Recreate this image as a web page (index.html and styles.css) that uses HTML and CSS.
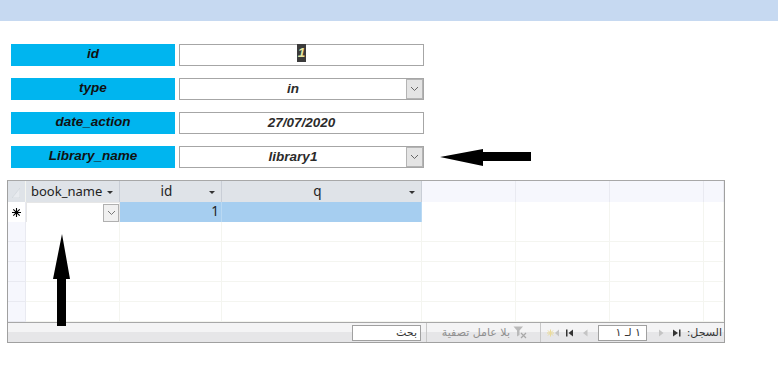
FILE: index.html
```html
<!DOCTYPE html>
<html lang="ar">
<head>
  <meta charset="UTF-8">
  <title>book_move</title>
  <link rel="stylesheet" href="styles.css">
</head>
<body dir="ltr">
  <div class="topbar"></div>

  <!-- Main form -->
  <div class="form">
    <div class="form-row">
      <div class="form-label">id</div>
      <div class="form-field"><span class="field-text"><span class="caret-sel">1</span></span></div>
    </div>
    <div class="form-row">
      <div class="form-label">type</div>
      <div class="form-field">
        <span class="field-text">in</span>
        <span class="drop-btn"><svg width="9" height="6" viewBox="0 0 9 6"><path d="M1 1 L4.5 4.5 L8 1" fill="none" stroke="#666" stroke-width="1"/></svg></span>
      </div>
    </div>
    <div class="form-row">
      <div class="form-label">date_action</div>
      <div class="form-field"><span class="field-text">27/07/2020</span></div>
    </div>
    <div class="form-row">
      <div class="form-label">Library_name</div>
      <div class="form-field">
        <span class="field-text">library1</span>
        <span class="drop-btn"><svg width="9" height="6" viewBox="0 0 9 6"><path d="M1 1 L4.5 4.5 L8 1" fill="none" stroke="#666" stroke-width="1"/></svg></span>
      </div>
    </div>
  </div>

  <!-- Subform datasheet -->
  <div class="sheet">
    <div class="sheet-row sheet-head">
      <div class="cell corner"><svg width="8" height="10" viewBox="0 0 8 10"><path d="M8 0 L8 10 L0 10 Z" fill="#e8ebef" stroke="#cfd3d9" stroke-width="0.6"/></svg></div>
      <div class="cell head-cell left"><span class="head-text">book_name</span><span class="head-arrow"></span></div>
      <div class="cell head-cell"><span class="head-text">id</span><span class="head-arrow"></span></div>
      <div class="cell head-cell"><span class="head-text">q</span><span class="head-arrow"></span></div>
      <div class="cell head-empty"></div>
      <div class="cell head-empty"></div>
      <div class="cell head-empty"></div>
      <div class="cell head-empty"></div>
    </div>

    <div class="sheet-row new-row">
      <div class="cell selector">
        <svg width="9" height="9" viewBox="0 0 9 9"><path d="M4.5 0 V9 M0 4.5 H9 M1.3 1.3 L7.7 7.7 M7.7 1.3 L1.3 7.7" stroke="#000" stroke-width="1.1"/></svg>
      </div>
      <div class="cell combo-cell"><span class="combo-btn"><svg width="9" height="6" viewBox="0 0 9 6"><path d="M1 1 L4.5 4.5 L8 1" fill="none" stroke="#777" stroke-width="1"/></svg></span></div>
      <div class="cell sel num">1</div>
      <div class="cell sel"></div>
      <div class="cell"></div>
      <div class="cell"></div>
      <div class="cell"></div>
      <div class="cell"></div>
    </div>

    <div class="sheet-row"><div class="cell selector"></div><div class="cell"></div><div class="cell"></div><div class="cell"></div><div class="cell"></div><div class="cell"></div><div class="cell"></div><div class="cell"></div></div>
    <div class="sheet-row"><div class="cell selector"></div><div class="cell"></div><div class="cell"></div><div class="cell"></div><div class="cell"></div><div class="cell"></div><div class="cell"></div><div class="cell"></div></div>
    <div class="sheet-row"><div class="cell selector"></div><div class="cell"></div><div class="cell"></div><div class="cell"></div><div class="cell"></div><div class="cell"></div><div class="cell"></div><div class="cell"></div></div>
    <div class="sheet-row"><div class="cell selector"></div><div class="cell"></div><div class="cell"></div><div class="cell"></div><div class="cell"></div><div class="cell"></div><div class="cell"></div><div class="cell"></div></div>
    <div class="sheet-row"><div class="cell selector"></div><div class="cell"></div><div class="cell"></div><div class="cell"></div><div class="cell"></div><div class="cell"></div><div class="cell"></div><div class="cell"></div></div>

    <!-- Record navigation -->
    <div class="nav" dir="rtl">
      <span class="nav-label">السجل:</span>
      <span class="nav-ico nav-first"><svg width="8" height="8" viewBox="0 0 8 8"><path d="M0 0.5 L5 4 L0 7.5 Z" fill="#333"/><rect x="6" y="0.5" width="1.5" height="7" fill="#333"/></svg></span>
      <span class="nav-ico nav-prev"><svg width="5" height="8" viewBox="0 0 5 8"><path d="M0 0.5 L4.5 4 L0 7.5 Z" fill="#c4c4c4"/></svg></span>
      <span class="nav-box">١ لـ ١</span>
      <span class="nav-ico nav-next"><svg width="5" height="8" viewBox="0 0 5 8"><path d="M4.5 0.5 L0 4 L4.5 7.5 Z" fill="#c4c4c4"/></svg></span>
      <span class="nav-ico nav-last"><svg width="7" height="8" viewBox="0 0 7 8"><rect x="0" y="0.5" width="1.5" height="7" fill="#333"/><path d="M7 0.5 L2.5 4 L7 7.5 Z" fill="#333"/></svg></span>
      <span class="nav-ico nav-new"><svg width="12" height="8" viewBox="0 0 12 8"><path d="M3.5 0.5 V7.5 M0 4 H7 M1 1.5 L6 6.5 M6 1.5 L1 6.5" stroke="#eadb9a" stroke-width="1"/><path d="M12 0.5 L8 4 L12 7.5 Z" fill="#c4c4c4"/></svg></span>
      <span class="nav-sep"></span>
      <span class="nav-ico nav-filter"><svg width="14" height="13" viewBox="0 0 14 13"><path d="M0.5 0.5 H10 L6.5 4.5 V9 L4 10.5 V4.5 Z" fill="#b9b9b9"/><path d="M8 7 L13 12 M13 7 L8 12" stroke="#a8a8a8" stroke-width="1.2"/></svg></span>
      <span class="nav-filter-text">بلا عامل تصفية</span>
      <span class="nav-sep sep-2"></span>
      <span class="nav-search">بحث</span>
    </div>
  </div>

  <!-- Annotation arrows drawn over the screenshot -->
  <svg class="arrow-left" width="92" height="20" viewBox="0 0 92 20">
    <path d="M0 9 L43 1 L43 4 L91 4 L91 13 L43 13 L43 18 Z" fill="#000"/>
  </svg>
  <svg class="arrow-up" width="18" height="92" viewBox="0 0 18 92">
    <path d="M9 0 L17 45 L13 45 L13 92 L4 92 L4 45 L0 45 Z" fill="#000"/>
  </svg>
</body>
</html>
```

FILE: styles.css
```css
body {
  margin: 0;
  background: #fff;
  font-family: "Liberation Sans", Arial, sans-serif;
  position: relative;
  height: 379px;
  overflow: hidden;
}

.topbar {
  height: 21px;
  background-color: #c6d9f1;
}

/* Form section */
.form {
  display: flex;
  flex-direction: column;
  gap: 12px;
  padding: 23px 0 0 11px;
}

.form-row {
  display: flex;
  gap: 4px;
  height: 22px;
}

.form-label {
  width: 164px;
  background-color: #00b5ef;
  color: #111;
  font-weight: bold;
  font-style: italic;
  font-size: 13.5px;
  display: flex;
  justify-content: center;
  align-items: center;
  padding-bottom: 3px;
  box-sizing: border-box;
}

.form-field {
  width: 245px;
  box-sizing: border-box;
  border: 1px solid #a6a6a6;
  display: flex;
  align-items: stretch;
  background: #fff;
}

.field-text {
  flex: 1;
  display: flex;
  justify-content: center;
  align-items: center;
  font-weight: bold;
  font-style: italic;
  font-size: 13.5px;
  color: #2b2b2b;
  padding-bottom: 1px;
}

.caret-sel {
  background: #3b3b3b;
  color: #e6e6a0;
  padding: 2px 1px 3px;
  margin-top: -3px;
  line-height: 13px;
}

.drop-btn {
  width: 17px;
  box-sizing: border-box;
  border: 1px solid #b4b4b4;
  background: #e4e4e4;
  display: flex;
  justify-content: center;
  align-items: center;
}

/* Datasheet */
.sheet {
  margin: 12px 0 0 7px;
  width: 718px;
  box-sizing: border-box;
  border: 1px solid #a0a0a0;
  border-top-color: #a8a8a8;
  font-family: "Noto Sans", sans-serif;
  font-size: 13px;
  color: #222;
}

.sheet-row {
  display: grid;
  grid-template-columns: 18px 94px 102px 200px 94px 94px 94px 20px;
  height: 20px;
}

.cell {
  box-sizing: border-box;
  border-right: 1px solid #f4f5f0;
  border-bottom: 1px solid #f4f5f0;
  background: #fff;
}

.sheet-head {
  height: 21px;
}

.sheet-head .cell {
  border-bottom: none;
}

.corner {
  background: #dfe3e8;
  display: flex;
  align-items: flex-end;
  padding: 0 0 4px 4px;
}

.head-cell {
  background: #dfe3e8;
  border-right: 1px solid #c9ced6;
  display: flex;
  align-items: center;
  padding: 0 6px 0 4px;
}

.head-text {
  flex: 1;
  text-align: center;
  line-height: 20px;
  margin-top: -2px;
  font-size: 13.5px;
}

.head-cell.left .head-text {
  text-align: left;
  padding-left: 1px;
  font-size: 13px;
}

.head-arrow {
  width: 0;
  height: 0;
  border-left: 3px solid transparent;
  border-right: 3px solid transparent;
  border-top: 3px solid #333;
  margin-top: 2px;
}

.head-empty {
  background: #f6f7fd;
  border-right: 1px solid #e9eaf1;
}

.selector {
  background: #f6f7fd;
  border-right: 1px solid #e9eaf1;
  border-bottom: 1px solid #e9eaf1;
}

.new-row .selector {
  background: #fff;
  display: flex;
  align-items: center;
  padding-left: 4px;
}

.combo-cell {
  display: flex;
  justify-content: flex-end;
  border: 1px solid #e6e6e6;
  padding: 1px 0 0;
}

.combo-btn {
  width: 16px;
  height: 18px;
  box-sizing: border-box;
  border: 1px solid #b0b0b0;
  background: #f0f0f0;
  display: flex;
  justify-content: center;
  align-items: center;
}

.sel {
  background: #a6cef0;
  border-right: 1px solid #b9d9f3;
  border-bottom: 1px solid #eef3f8;
}

.num {
  text-align: right;
  padding-right: 2px;
  line-height: 19px;
  font-size: 13.5px;
}

/* Navigation bar */
.nav {
  height: 19px;
  border-top: 1px solid #a8a8a8;
  background: linear-gradient(#f4f4f5 0, #f4f4f5 50%, #e6e6e8 50%, #e6e6e8 100%);
  display: flex;
  align-items: center;
  padding-right: 2px;
  font-family: "DejaVu Sans", sans-serif;
  font-size: 11px;
  color: #333;
}

.nav-label {
  width: 37px;
  margin-left: 4px;
  white-space: nowrap;
}

.nav-ico {
  display: flex;
  align-items: center;
}

.nav-first {
  margin-left: 9px;
}

.nav-prev {
  margin-left: 12px;
}

.nav-box {
  width: 49px;
  height: 16px;
  box-sizing: border-box;
  border: 1px solid #a0a0a0;
  background: #fff;
  padding-right: 5px;
  line-height: 14px;
  margin-left: 10px;
}

.nav-next {
  margin-left: 10px;
}

.nav-last {
  margin-left: 7px;
}

.nav-new {
  margin-left: 6px;
}

.nav-sep {
  width: 1px;
  height: 19px;
  background: #c8c8c8;
  margin-left: 13px;
}

.nav-filter {
  margin-left: 3px;
}

.nav-filter-text {
  width: 79px;
  color: #8f8f8f;
  white-space: nowrap;
  margin-left: 4px;
}

.sep-2 {
  margin-left: 5px;
}

.nav-search {
  width: 69px;
  height: 16px;
  box-sizing: border-box;
  border: 1px solid #a0a0a0;
  background: #fff;
  padding-right: 3px;
  line-height: 14px;
}

/* Annotation arrows */
.arrow-left {
  position: absolute;
  left: 440px;
  top: 148px;
}

.arrow-up {
  position: absolute;
  left: 53px;
  top: 234px;
}
```
